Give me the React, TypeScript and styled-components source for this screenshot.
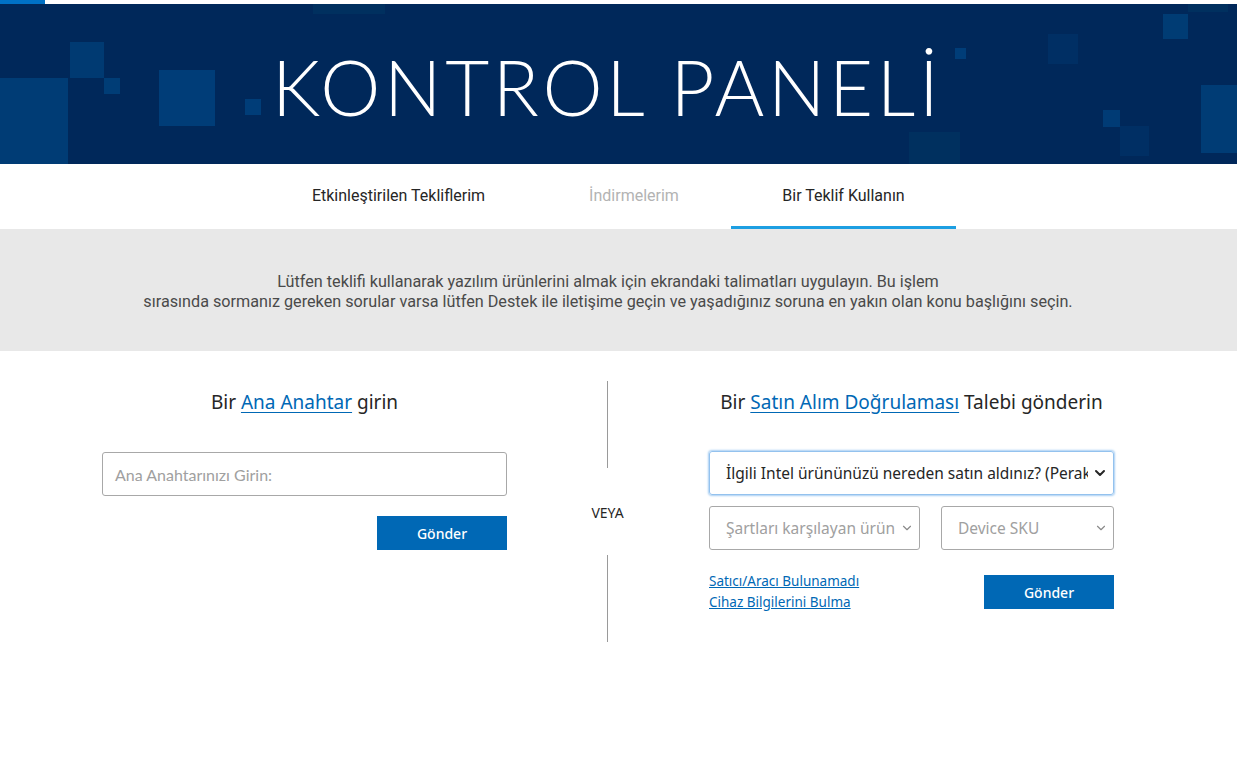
import React from "react";
import styled, { createGlobalStyle } from "styled-components";
import { ChevronDown } from "lucide-react";

const Global = createGlobalStyle`
  html, body { margin: 0; padding: 0; background: #fff; }
  body { font-family: "Noto Sans", "Open Sans", sans-serif; color: #262626; }
  * { box-sizing: border-box; }
`;

const Page = styled.div`
  width: 1237px;
  min-height: 760px;
  background: #fff;
`;

const TopStrip = styled.div`
  height: 4px;
  background: #fff;
  display: flex;
`;

const TopAccent = styled.div`
  width: 45px;
  background: #0071c5;
`;

const Banner = styled.header`
  position: relative;
  height: 160px;
  background: #00285a;
  overflow: hidden;
  display: flex;
  align-items: center;
  padding-left: 272px;
`;

const BannerArt = styled.svg`
  position: absolute;
  inset: 0;
`;

const Title = styled.h1`
  position: relative;
  margin: 0;
  font-family: "Lato", "Open Sans", sans-serif;
  font-weight: 300;
  font-size: 76px;
  letter-spacing: 3.7px;
  color: #fff;
  line-height: 1;
  padding-top: 5px;
`;

const Tabs = styled.nav`
  height: 65px;
  display: flex;
  justify-content: flex-start;
  padding-left: 286px;
  background: #fff;
`;

const Tab = styled.div<{ $w: number; $active?: boolean; $muted?: boolean; $shift?: number }>`
  width: ${(p) => p.$w}px;
  display: flex;
  align-items: center;
  justify-content: center;
  font-family: "Roboto", "Noto Sans", sans-serif;
  font-size: 16px;
  color: ${(p) => (p.$muted ? "#b3b3b3" : "#262626")};
  border-bottom: 3px solid ${(p) => (p.$active ? "#1d9fe2" : "transparent")};
  padding-top: 1px;
  padding-left: ${(p) => p.$shift ?? 0}px;
`;

const Notice = styled.section`
  height: 122px;
  background: #e8e8e8;
  display: flex;
  align-items: center;
  justify-content: center;
  padding: 3px 21px 0 0;
`;

const NoticeText = styled.p`
  margin: 0;
  text-align: center;
  font-family: "Roboto", "Noto Sans", sans-serif;
  font-size: 16.2px;
  line-height: 20px;
  color: #4a4a4a;
`;

const Main = styled.main`
  display: flex;
  padding-top: 30px;
  padding-left: 102px;
`;

const Column = styled.div`
  width: 405px;
  display: flex;
  flex-direction: column;
`;

const Heading = styled.h2`
  margin: 7px 0 0;
  height: 28px;
  font-family: "Noto Sans", sans-serif;
  font-weight: 400;
  font-size: 19px;
  line-height: 28px;
  text-align: center;
  color: #262626;
`;

const HeadLink = styled.a`
  color: #0068b5;
  text-decoration: underline;
  text-underline-offset: 3px;
`;

const TextInput = styled.div`
  margin-top: 36px;
  height: 44px;
  border: 1px solid #a8a8a8;
  border-radius: 3px;
  display: flex;
  align-items: center;
  padding-left: 12px;
  font-family: "Lato", "Noto Sans", sans-serif;
  font-size: 16px;
  color: #a0a0a0;
`;

const ButtonRow = styled.div<{ $mt: number }>`
  margin-top: ${(p) => p.$mt}px;
  display: flex;
  justify-content: flex-end;
  align-items: flex-start;
`;

const Button = styled.button`
  width: 130px;
  height: 34px;
  border: none;
  border-radius: 0;
  background: #0068b5;
  color: #fff;
  font-family: "Noto Sans", sans-serif;
  font-weight: 500;
  font-size: 14px;
  cursor: pointer;
`;

const Divider = styled.div`
  width: 202px;
  display: flex;
  flex-direction: column;
  align-items: center;
  padding-right: 1px;
`;

const Line = styled.div`
  width: 1px;
  height: 87px;
  background: #9a9a9a;
`;

const Or = styled.div`
  height: 87px;
  display: flex;
  align-items: center;
  font-family: "Noto Sans", sans-serif;
  font-size: 14px;
  color: #262626;
  padding-top: 2px;
`;

const Select = styled.div<{ $focus?: boolean; $placeholder?: boolean; $w?: number }>`
  ${(p) => (p.$w ? `width: ${p.$w}px;` : "flex: 1;")}
  height: 44px;
  border: 1px solid ${(p) => (p.$focus ? "#94c2ee" : "#a8a8a8")};
  box-shadow: ${(p) => (p.$focus ? "0 0 2px 1px #a9cff3" : "none")};
  border-radius: 3px;
  display: flex;
  align-items: center;
  justify-content: space-between;
  gap: 4px;
  padding: 0 5px 0 16px;
  font-family: "Noto Sans", sans-serif;
  font-size: 15.5px;
  color: ${(p) => (p.$placeholder ? "#a0a0a0" : "#262626")};
  white-space: nowrap;
  overflow: hidden;
`;

const SelectLabel = styled.span`
  overflow: hidden;
  flex: 1;
  min-width: 0;
`;

const Chevron = styled(ChevronDown)<{ $dim?: boolean }>`
  flex: none;
  color: ${(p) => (p.$dim ? "#8a8a8a" : "#262626")};
`;

const SelectRow = styled.div`
  margin-top: 11px;
  display: flex;
  gap: 21px;
`;

const FirstSelectWrap = styled.div`
  margin-top: 35px;
  display: flex;
`;

const Footer = styled.div`
  margin-top: 25px;
  display: flex;
  justify-content: space-between;
  align-items: flex-start;
`;

const Links = styled.div`
  display: flex;
  flex-direction: column;
  gap: 2px;
  margin-top: -3px;
`;

const SmallLink = styled.a`
  font-family: "Noto Sans", sans-serif;
  font-size: 13.5px;
  line-height: 19px;
  color: #0068b5;
  text-decoration: underline;
`;

const squares: [number, number, number, number, string][] = [
  [0, 74, 68, 86, "#003c75"],
  [70, 38, 34, 36, "#003a72"],
  [104, 74, 16, 16, "#003d76"],
  [159, 66, 56, 56, "#003d78"],
  [245, 95, 16, 16, "#003d78"],
  [313, 0, 72, 10, "#00305f"],
  [955, 44, 11, 11, "#003d78"],
  [1048, 30, 30, 30, "#002f64"],
  [1163, 10, 25, 25, "#003c74"],
  [1188, 0, 40, 8, "#00305f"],
  [1103, 106, 17, 17, "#003b75"],
  [1120, 122, 29, 30, "#002f64"],
  [1201, 81, 36, 68, "#003c75"],
  [909, 128, 51, 32, "#00305f"],
];

export default function App() {
  return (
    <Page>
      <Global />
      <TopStrip>
        <TopAccent />
      </TopStrip>
      <Banner>
        <BannerArt width="1237" height="160" viewBox="0 0 1237 160">
          {squares.map(([x, y, w, h, c], i) => (
            <rect key={i} x={x} y={y} width={w} height={h} fill={c} />
          ))}
        </BannerArt>
        <Title>KONTROL PANELİ</Title>
      </Banner>
      <Tabs>
        <Tab $w={225}>Etkinleştirilen Tekliflerim</Tab>
        <Tab $w={220} $muted $shift={26}>İndirmelerim</Tab>
        <Tab $w={225} $active>Bir Teklif Kullanın</Tab>
      </Tabs>
      <Notice>
        <NoticeText>
          Lütfen teklifi kullanarak yazılım ürünlerini almak için ekrandaki talimatları uygulayın. Bu işlem
          <br />
          sırasında sormanız gereken sorular varsa lütfen Destek ile iletişime geçin ve yaşadığınız soruna en yakın olan konu başlığını seçin.
        </NoticeText>
      </Notice>
      <Main>
        <Column>
          <Heading>
            Bir <HeadLink>Ana Anahtar</HeadLink> girin
          </Heading>
          <TextInput>Ana Anahtarınızı Girin:</TextInput>
          <ButtonRow $mt={20}>
            <Button>Gönder</Button>
          </ButtonRow>
        </Column>
        <Divider>
          <Line />
          <Or>VEYA</Or>
          <Line />
        </Divider>
        <Column>
          <Heading>
            Bir <HeadLink>Satın Alım Doğrulaması</HeadLink> Talebi gönderin
          </Heading>
          <FirstSelectWrap>
            <Select $focus>
              <SelectLabel>İlgili Intel ürününüzü nereden satın aldınız? (Perakende)</SelectLabel>
              <Chevron size={16} strokeWidth={3} />
            </Select>
          </FirstSelectWrap>
          <SelectRow>
            <Select $placeholder $w={211}>
              <SelectLabel>Şartları karşılayan ürün</SelectLabel>
              <Chevron size={14} strokeWidth={2} $dim />
            </Select>
            <Select $placeholder>
              <SelectLabel>Device SKU</SelectLabel>
              <Chevron size={14} strokeWidth={2} $dim />
            </Select>
          </SelectRow>
          <Footer>
            <Links>
              <SmallLink>Satıcı/Aracı Bulunamadı</SmallLink>
              <SmallLink>Cihaz Bilgilerini Bulma</SmallLink>
            </Links>
            <Button>Gönder</Button>
          </Footer>
        </Column>
      </Main>
    </Page>
  );
}
